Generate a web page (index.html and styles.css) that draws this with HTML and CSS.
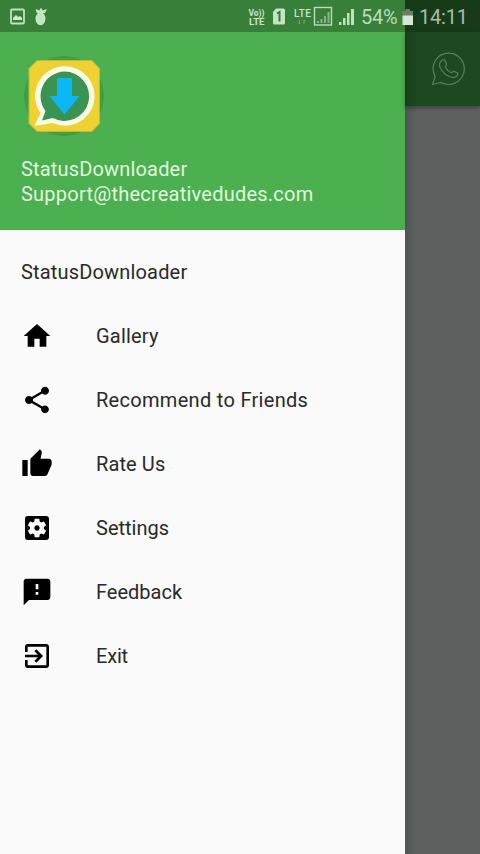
FILE: index.html
```
<!DOCTYPE html>
<html lang="en">
<head>
    <meta charset="UTF-8">
    <title>StatusDownloader</title>
    <link rel="stylesheet" href="styles.css">
</head>
<body>
    <div class="screen">
        <div class="status-bar">
            <svg class="status-icons" width="360" height="32" viewBox="0 0 360 32">
                <!-- screenshot saved -->
                <rect x="11" y="9.500" width="13" height="14" rx="1" fill="none" stroke="#bfe3bf" stroke-width="1.800"/>
                <path d="M13 20v-2l3-3 2 2 2-1 2 2v2z" fill="#c9ebc9"/>
                <!-- cleaner -->
                <path d="M35.500 9l4 1.500.5-2h2l.5 2 4.500-1.500-2 4-2 .3c1.500 1.200 2.500 3 2.500 5 0 3.700-2 7-5 7s-5-3.300-5-7c0-2 1-3.800 2.500-5l-1.500-.8z" fill="#c2e8c2"/>
                <!-- network indicators -->
                <g fill="#c9e6c9" font-family="Roboto, sans-serif" font-weight="700">
                    <text x="248.500" y="16" font-size="9" textLength="16" lengthAdjust="spacingAndGlyphs">Vo))</text>
                    <text x="249" y="24.500" font-size="9" textLength="15.500" lengthAdjust="spacingAndGlyphs">LTE</text>
                    <text x="294" y="16.500" font-size="10" font-weight="500" textLength="17">LTE</text>
                </g>
                <path d="M276 8.500h7.500a1.500 1.500 0 0 1 1.500 1.500v13a1.500 1.500 0 0 1-1.500 1.500h-9a1.500 1.500 0 0 1-1.500-1.500V12z" fill="#c5e6c5"/>
                <path d="M277 13.500l2.500-1.500v9.500" fill="none" stroke="#357d37" stroke-width="2"/>
                <path d="M299.500 20v4l-1.500-1.500M304 24v-4l1.500 1.500" fill="none" stroke="#6fa970" stroke-width="1"/>
                <rect x="314.500" y="7.500" width="17" height="17.500" fill="none" stroke="#b9dfb9" stroke-width="1.400"/>
                <path d="M317 23v-2h2v2zM320.500 23v-4h2v4zM324 23v-7h2v7zM327.500 23V12h2v11z" fill="#83b884"/>
                <path d="M339 25v-3h2.500v3zM343 25v-7h2.500v7zM347 25V13h2.500v12zM351 25V9h3v16z" fill="#bde3bd"/>
            </svg>
            <span class="percent">54%</span>
            <svg class="battery" width="12" height="18" viewBox="0 0 12 18">
                <path d="M3.500 1h4.500v2h3v5H.5V3h3z" fill="#6a806a"/>
                <path d="M.5 7.500H11V17H.5z" fill="#d6e6d6"/>
            </svg>
            <span class="clock">14:11</span>
        </div>

        <div class="drawer">
            <div class="drawer-header">
                <svg class="app-logo" width="86" height="86" viewBox="0 0 86 86">
                    <circle cx="43" cy="43" r="40" fill="#3f9f42"/>
                    <path d="M16 7.500h55l7.500 8v55l-7.500 8H16l-8-8v-55z" fill="#eed233" stroke="#c3b832" stroke-width="1" stroke-linejoin="round"/>
                    <path d="M43.500 13.300a29.700 29.700 0 1 1-12 56.700L13.500 73l6-13A29.700 29.700 0 0 1 43.500 13.300z" fill="#fbfbe6"/>
                    <path d="M43.300 18.500a24.700 24.700 0 1 1-11.500 46.500L21 67.500l3.500-9.500A24.700 24.700 0 0 1 43.300 18.500z" fill="#399454"/>
                    <path d="M36 25h15v18h7.500L43.500 61.500 28.500 43H36z" fill="#0bb7f4"/>
                </svg>
                <div class="account-name">StatusDownloader</div>
                <div class="account-email">Support@thecreativedudes.com</div>
            </div>

            <h2 class="menu-title">StatusDownloader</h2>
            <ul class="menu">
                <li class="menu-item">
                    <svg class="menu-icon" viewBox="0 0 24 24"><path d="M10 20v-6h4v6h5v-8h3L12 3 2 12h3v8z"/></svg>
                    <span class="gallery">Gallery</span>
                </li>
                <li class="menu-item">
                    <svg class="menu-icon" viewBox="0 0 24 24"><path d="M18 16.080c-.76 0-1.440.3-1.960.77L8.910 12.700c.05-.23.09-.46.09-.7s-.04-.47-.09-.7l7.050-4.110c.54.5 1.250.81 2.040.81 1.660 0 3-1.340 3-3s-1.340-3-3-3-3 1.340-3 3c0 .24.04.47.09.7L8.040 9.810C7.500 9.310 6.790 9 6 9c-1.660 0-3 1.340-3 3s1.340 3 3 3c.79 0 1.500-.31 2.040-.81l7.120 4.160c-.05.21-.08.43-.08.65 0 1.610 1.310 2.920 2.920 2.920s2.920-1.310 2.920-2.920-1.310-2.920-2.920-2.920z"/></svg>
                    <span class="recommend">Recommend to Friends</span>
                </li>
                <li class="menu-item">
                    <svg class="menu-icon" viewBox="0 0 24 24"><path d="M1 21h4V9H1v12zm22-11c0-1.100-.9-2-2-2h-6.310l.95-4.570.03-.32c0-.41-.17-.79-.44-1.060L14.170 1 7.590 7.590C7.220 7.950 7 8.450 7 9v10c0 1.100.9 2 2 2h9c.83 0 1.540-.5 1.840-1.220l3.020-7.050c.09-.23.14-.47.14-.73v-2z"/></svg>
                    <span class="rate">Rate Us</span>
                </li>
                <li class="menu-item">
                    <svg class="menu-icon" viewBox="0 0 24 24"><path d="M12 10c-1.100 0-2 .9-2 2s.9 2 2 2 2-.9 2-2-.9-2-2-2zm7-7H5c-1.110 0-2 .9-2 2v14c0 1.100.89 2 2 2h14c1.110 0 2-.9 2-2V5c0-1.100-.89-2-2-2zm-1.750 9c0 .23-.02.46-.05.68l1.480 1.160c.13.11.17.3.08.45l-1.400 2.420c-.09.15-.27.21-.43.15l-1.740-.7c-.36.28-.76.51-1.180.69l-.26 1.850c-.03.17-.18.3-.35.3h-2.800c-.17 0-.32-.13-.35-.29l-.26-1.850c-.43-.18-.82-.41-1.180-.69l-1.740.7c-.16.06-.34 0-.43-.15l-1.400-2.420c-.09-.15-.05-.34.08-.45l1.480-1.160c-.03-.23-.05-.46-.05-.69 0-.23.02-.46.05-.68l-1.480-1.160c-.13-.11-.17-.3-.08-.45l1.400-2.420c.09-.15.27-.21.43-.15l1.740.7c.36-.28.76-.51 1.180-.69l.26-1.850c.03-.17.18-.3.35-.3h2.800c.17 0 .32.13.35.29l.26 1.850c.43.18.82.41 1.180.69l1.740-.7c.16-.06.34 0 .43.15l1.400 2.420c.09.15.05.34-.08.45l-1.480 1.160c.03.23.05.46.05.69z"/></svg>
                    <span class="settings">Settings</span>
                </li>
                <li class="menu-item">
                    <svg class="menu-icon" viewBox="0 0 24 24"><path d="M20 2H4c-1.100 0-1.990.9-1.990 2L2 22l4-4h14c1.100 0 2-.9 2-2V4c0-1.100-.9-2-2-2zm-7 12h-2v-2h2v2zm0-4h-2V6h2v4z"/></svg>
                    <span class="feedback">Feedback</span>
                </li>
                <li class="menu-item">
                    <svg class="menu-icon" viewBox="0 0 24 24"><path d="M10.090 15.590L11.500 17l5-5-5-5-1.410 1.410L12.670 11H3v2h9.670l-2.580 2.590zM19 3H5c-1.110 0-2 .9-2 2v4h2V5h14v14H5v-4H3v4c0 1.100.89 2 2 2h14c1.100 0 2-.9 2-2V5c0-1.100-.9-2-2-2z"/></svg>
                    <span class="exit">Exit</span>
                </li>
            </ul>
        </div>

        <div class="page-behind">
            <div class="toolbar">
                <svg width="34" height="34" viewBox="0 0 34 34" fill="none" stroke="#57805a" stroke-width="1.200" stroke-linejoin="round">
                    <path d="M17.500 1.200a15.600 15.600 0 1 1-7.500 29.200L1.500 32.500l2.700-8A15.600 15.600 0 0 1 17.500 1.200z"/>
                    <path d="M11 8.300c1-1 2.500-.8 3 .2l1.500 3.500c.3 1-1.600 2.200-1.300 3 1.300 2.700 3.300 4.500 6 5.700.9.300 1.800-2 2.900-1.500l3.300 1.700c1 .6.300 2.500-.6 3.300-2 1.700-4.500 1.500-7.500.3-4-1.700-7-4.600-9-8.500-1.300-2.800-.8-5.800 1.700-7.700z"/>
                </svg>
            </div>
        </div>
    </div>
</body>
</html>
```
FILE: styles.css
```
* {
    box-sizing: border-box;
}

body {
    margin: 0;
    font-family: Roboto, sans-serif;
    font-size: 20px;
    overflow: hidden;
}

.screen {
    display: grid;
    grid-template-columns: 405px 75px;
    grid-template-rows: 32px 822px;
    width: 480px;
    height: 854px;
}

.status-bar {
    grid-column: 1 / 3;
    display: flex;
    align-items: center;
    background: linear-gradient(90deg, #387f39 405px, #173b19 405px);
    color: #bcdcbc;
    white-space: nowrap;
}

.status-icons {
    flex: none;
}

.percent {
    width: 38px;
    margin: 2px 0 0 1px;
    letter-spacing: -0.2px;
}

.battery {
    flex: none;
    margin: 1px 0 0 3px;
}

.clock {
    margin: 2px 0 0 5px;
    color: #a9bba9;
    letter-spacing: -0.2px;
}

.drawer {
    background: #fafafa;
}

.drawer-header {
    height: 197.5px;
    padding: 21px 21px 0;
    background: #4caf50;
    color: #e0f8df;
    line-height: 25px;
}

.app-logo {
    display: block;
    margin-bottom: 18px;
}

.account-name {
    letter-spacing: 0.17px;
}

.account-email {
    letter-spacing: 0.23px;
}

.menu-title {
    margin: 0;
    padding: 0 21px;
    font-size: 20px;
    font-weight: 400;
    line-height: 84px;
    height: 74.5px;
    color: #292929;
    letter-spacing: 0.17px;
}

.menu {
    list-style: none;
    margin: 0;
    padding: 0;
}

.menu-item {
    display: flex;
    align-items: center;
    gap: 43px;
    height: 64px;
    padding-left: 21px;
    color: #292929;
}

.menu-icon {
    flex: none;
    width: 32px;
    height: 32px;
    fill: #000;
}

.gallery {
    letter-spacing: 0.2px;
}

.recommend {
    letter-spacing: 0.3px;
}

.rate {
    letter-spacing: 0.1px;
}

.exit {
    letter-spacing: -0.2px;
}

.page-behind {
    background: linear-gradient(90deg, #505453, #5c605f 12px);
}

.toolbar {
    display: flex;
    justify-content: flex-end;
    height: 74px;
    padding: 20px 15px 0 0;
    background: linear-gradient(90deg, #183e1a, #1d4820 12px);
    box-shadow: 0 2px 4px rgba(0, 0, 0, 0.3);
}
```
